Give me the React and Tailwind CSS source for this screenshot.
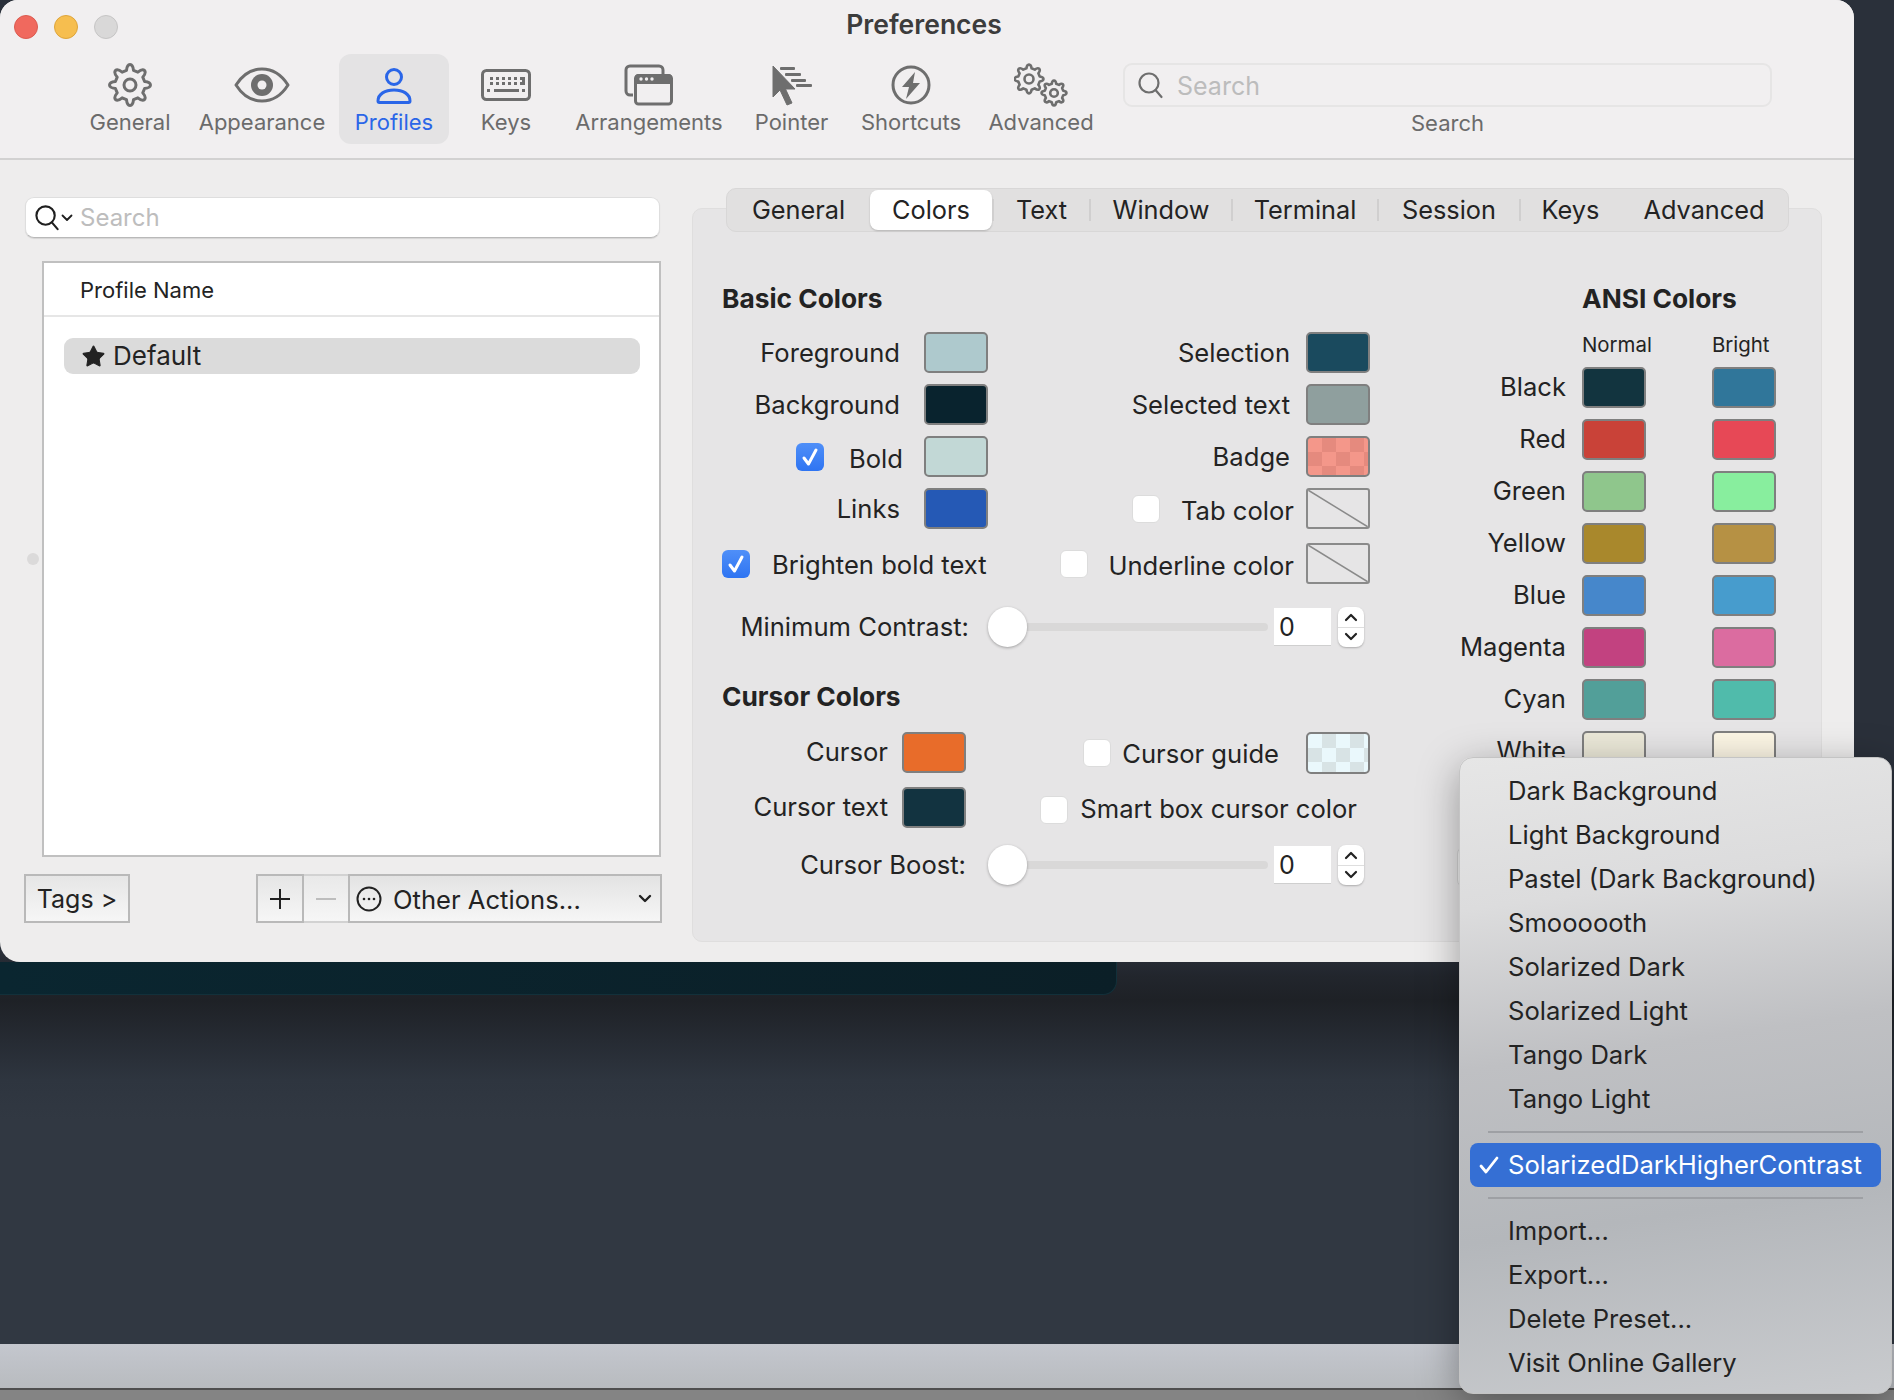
import { Star } from 'lucide-react'

const gray = '#6e6e6e'
const blue = '#2a66e8'

function gearPath(cx, cy, rOut, rIn, teeth = 8) {
  let d = ''
  const step = (Math.PI * 2) / teeth
  const pt = (r, a) => `${(cx + r * Math.cos(a)).toFixed(2)} ${(cy + r * Math.sin(a)).toFixed(2)}`
  for (let i = 0; i < teeth; i++) {
    const a = i * step - Math.PI / 2
    const w1 = step * 0.3
    const w2 = step * 0.17
    d += `${i === 0 ? 'M' : 'L'}${pt(rIn, a - w1)} Q${pt(rOut, a - w2 * 1.1)} ${pt(rOut, a)} Q${pt(rOut, a + w2 * 1.1)} ${pt(rIn, a + w1)} `
  }
  return d + 'Z'
}

function GearIcon() {
  return (
    <svg width="44" height="44" viewBox="0 0 44 44" fill="none" stroke={gray} strokeWidth="3" strokeLinejoin="round">
      <path d={gearPath(22, 22, 20.5, 15)} />
      <circle cx="22" cy="22" r="6" />
    </svg>
  )
}

function EyeIcon() {
  return (
    <svg width="56" height="36" viewBox="0 0 56 36" fill="none">
      <path d="M2 18C9 7 18 2 28 2s19 5 26 16c-7 11-16 16-26 16S9 29 2 18z" stroke={gray} strokeWidth="3" strokeLinejoin="round" />
      <circle cx="28" cy="18" r="11" fill={gray} />
      <circle cx="28" cy="18" r="4.5" fill="#f1eff0" />
    </svg>
  )
}

function PersonIcon() {
  return (
    <svg width="36" height="37" viewBox="0 0 36 37" fill="none" stroke={blue} strokeWidth="3">
      <circle cx="18" cy="10" r="7.5" />
      <path d="M2 34c0-7 7-11 16-11s16 4 16 11c0 1-.5 1.5-1.5 1.5h-29C2.500 35.500 2 35 2 34z" strokeLinejoin="round" />
    </svg>
  )
}

function KeyboardIcon() {
  const rows = [
    [9, 15, 21, 27, 33, 39],
    [9, 15, 21, 27, 33, 39],
  ]
  return (
    <svg width="50" height="32" viewBox="0 0 50 32" fill="none">
      <rect x="1.500" y="1.500" width="47" height="29" rx="4" stroke={gray} strokeWidth="3" />
      {rows.map((r, i) => r.map(x => <rect key={`${i}-${x}`} x={x} y={8 + i * 5} width="3" height="3" fill={gray} />))}
      <rect x="41" y="8" width="3" height="8" fill={gray} />
      <rect x="6" y="20" width="3" height="3" fill={gray} />
      <rect x="13" y="20" width="25" height="3" fill={gray} />
      <rect x="41" y="20" width="3" height="3" fill={gray} />
    </svg>
  )
}

function WindowsIcon() {
  return (
    <svg width="50" height="42" viewBox="0 0 50 42" fill="none">
      <path d="M9 31H6a4 4 0 0 1-4-4V6a4 4 0 0 1 4-4h29a4 4 0 0 1 4 4v5" stroke={gray} strokeWidth="3" />
      <rect x="11.500" y="11.500" width="36" height="28.500" rx="3" stroke={gray} strokeWidth="3" />
      <path d="M11 20v-6a4 4 0 0 1 4-4h29a4 4 0 0 1 4 4v6z" fill={gray} />
      <circle cx="17" cy="15" r="1.700" fill="#f1eff0" />
      <circle cx="22.500" cy="15" r="1.700" fill="#f1eff0" />
      <circle cx="28" cy="15" r="1.700" fill="#f1eff0" />
    </svg>
  )
}

function PointerIcon() {
  return (
    <svg width="42" height="42" viewBox="0 0 42 42" fill={gray}>
      <path d="M2 2v31l7-7 7 15 5-2-6.500-14H24z" stroke={gray} strokeWidth="1" strokeLinejoin="round" />
      <rect x="9" y="3" width="15" height="3" rx="1" />
      <rect x="14" y="9" width="16" height="3" rx="1" />
      <rect x="20" y="15" width="15" height="3" rx="1" />
      <rect x="25" y="20" width="16" height="3" rx="1" />
    </svg>
  )
}

function BoltIcon() {
  return (
    <svg width="40" height="40" viewBox="0 0 40 40" fill="none">
      <circle cx="20" cy="20" r="18" stroke={gray} strokeWidth="3" />
      <path d="M24 7L11 22h7l-3 12 14-16h-7z" fill={gray} />
    </svg>
  )
}

function GearsIcon() {
  return (
    <svg width="54" height="44" viewBox="0 0 54 44" fill="none" stroke={gray} strokeWidth="2.600" strokeLinejoin="round">
      <path d={gearPath(15, 16, 14.500, 11)} />
      <circle cx="15" cy="16" r="4.500" />
      <path d={gearPath(40, 30, 12.500, 9.500)} />
      <circle cx="40" cy="30" r="3.800" />
    </svg>
  )
}

const toolbarItems = [
  { label: 'General', w: 'w-[110px]', icon: <GearIcon /> },
  { label: 'Appearance', w: 'w-[154px]', icon: <EyeIcon /> },
  { label: 'Profiles', w: 'w-[110px]', icon: <PersonIcon />, active: true },
  { label: 'Keys', w: 'w-[114px]', icon: <KeyboardIcon /> },
  { label: 'Arrangements', w: 'w-[172px]', icon: <WindowsIcon /> },
  { label: 'Pointer', w: 'w-[113px]', icon: <PointerIcon /> },
  { label: 'Shortcuts', w: 'w-[126px]', icon: <BoltIcon /> },
  { label: 'Advanced', w: 'w-[134px]', icon: <GearsIcon /> },
]

function ToolbarItem({ label, w, icon, active }) {
  return (
    <div className={`${w} h-[90px] flex flex-col items-center pt-[9px] rounded-xl ${active ? 'bg-[#e4e3e4] text-[#2a66e8]' : 'text-[#6b6b6b]'}`}>
      <div className="h-[44px] flex items-center justify-center">{icon}</div>
      <span className="mt-[2px] text-[22px] leading-[26px]">{label}</span>
    </div>
  )
}

function SearchGlass({ color = '#6e6e6e', w = 28 }) {
  return (
    <svg width={w} height={w} viewBox="0 0 28 28" fill="none" stroke={color} strokeWidth="2.200" strokeLinecap="round">
      <circle cx="12" cy="12" r="9.500" />
      <path d="M18.500 19l6 7" />
    </svg>
  )
}

function Swatch({ color, className = '', h = 'h-[41px]' }) {
  return <div className={`w-[64px] ${h} shrink-0 rounded-[5px] border-2 border-[#7f7f7f] ${className}`} style={color ? { backgroundColor: color } : undefined} />
}

function BadgeSwatch() {
  return <Swatch className="bg-[repeating-conic-gradient(#e58a7e_0_25%,#f4978a_0_50%)] bg-[length:28px_28px]" />
}

function GuideSwatch() {
  return <Swatch h="h-[42px]" className="bg-[repeating-conic-gradient(#d8e3e5_0_25%,#eaf8fc_0_50%)] bg-[length:28px_28px]" />
}

function NoneSwatch() {
  return (
    <div className="w-[64px] h-[41px] shrink-0 rounded-[3px] border-2 border-[#8a8a8a] overflow-hidden">
      <svg width="100%" height="100%" viewBox="0 0 60 37" preserveAspectRatio="none">
        <line x1="0" y1="0" x2="60" y2="37" stroke="#8a8a8a" strokeWidth="1.500" />
      </svg>
    </div>
  )
}

function Check({ on }) {
  if (!on) return <div className="w-[28px] h-[28px] shrink-0 rounded-[6px] bg-white border border-[#dcdcdc]" />
  return (
    <div className="w-[28px] h-[28px] shrink-0 rounded-[6px] bg-gradient-to-b from-[#4f8ff8] to-[#2e74f2] flex items-center justify-center">
      <svg width="18" height="20" viewBox="0 0 18 20" fill="none" stroke="#ffffff" strokeWidth="3" strokeLinecap="round" strokeLinejoin="round">
        <path d="M3 11l4.500 6L15 3" />
      </svg>
    </div>
  )
}

function Stepper() {
  return (
    <div className="w-[26px] h-[40px] shrink-0 rounded-[8px] bg-white flex flex-col items-center justify-between py-[6px] shadow-[0_1px_2px_rgba(0,0,0,0.25)]">
      <svg width="14" height="9" viewBox="0 0 14 9" fill="none" stroke="#222222" strokeWidth="2.200" strokeLinecap="round" strokeLinejoin="round"><path d="M2 7l5-5 5 5" /></svg>
      <div className="w-full h-px bg-[#dedede]" />
      <svg width="14" height="9" viewBox="0 0 14 9" fill="none" stroke="#222222" strokeWidth="2.200" strokeLinecap="round" strokeLinejoin="round"><path d="M2 2l5 5 5-5" /></svg>
    </div>
  )
}

function SliderRow({ label, labelW, gap }) {
  return (
    <div className="flex items-center h-[40px]">
      <div className={`${labelW} ${gap} text-right shrink-0`}>{label}</div>
      <div className="w-[280px] flex items-center">
        <div className="w-[39px] h-[40px] shrink-0 rounded-full bg-white shadow-[0_1px_3px_rgba(0,0,0,0.3)] z-10" />
        <div className="flex-1 h-[8px] rounded-r-full bg-[#d9d8d8]" />
      </div>
      <div className="ml-[6px] mr-[7px] w-[57px] h-[38px] shrink-0 bg-white border-b border-[#cfcfcf] pl-[5px] text-[25px] leading-[38px]">0</div>
      <Stepper />
    </div>
  )
}

const tabs = [
  { label: 'General', w: 'w-[143px]' },
  { label: 'Colors', w: 'w-[122px]', active: true },
  { label: 'Text', w: 'w-[95px]', sep: true },
  { label: 'Window', w: 'w-[140px]', sep: true },
  { label: 'Terminal', w: 'w-[144px]', sep: true },
  { label: 'Session', w: 'w-[140px]', sep: true },
  { label: 'Keys', w: 'w-[99px]', sep: true },
  { label: 'Advanced', w: 'flex-1' },
]

const ansi = [
  ['Black', '#12343f', '#30769a'],
  ['Red', '#c94238', '#e74856'],
  ['Green', '#8fc68c', '#88ee9e'],
  ['Yellow', '#a9882c', '#b69144'],
  ['Blue', '#4687cb', '#479ccd'],
  ['Magenta', '#c24280', '#db6ca0'],
  ['Cyan', '#529f99', '#50bbab'],
  ['White', '#ebe8d8', '#fbf5e4'],
]

const presets = ['Dark Background', 'Light Background', 'Pastel (Dark Background)', 'Smoooooth', 'Solarized Dark', 'Solarized Light', 'Tango Dark', 'Tango Light']
const presetActions = ['Import...', 'Export...', 'Delete Preset...', 'Visit Online Gallery']

function ColorsPanel() {
  return (
    <div className="w-[1130px] h-[734px] mt-[48px] rounded-[10px] bg-[#e6e5e6] border border-[#dfdede]">
      {/* tab strip sits over the panel's top edge */}
      <div className="ml-[33px] w-[1063px] h-[44px] -mt-[21px] rounded-[10px] bg-[#e1e0e0] border border-[#d8d7d7] flex items-center text-[25.3px]">
        {tabs.map(t => (
          <div key={t.label} className="contents">
            {t.sep && <div className="w-[2px] h-[22px] bg-[#d0cfcf] shrink-0" />}
            <div className={`${t.w} h-[40px] flex items-center justify-center ${t.active ? 'bg-white rounded-[8px] shadow-[0_1px_2px_rgba(0,0,0,0.2)]' : ''}`}>
              {t.label}
            </div>
          </div>
        ))}
      </div>

      <div className="flex pl-[29px]">
        {/* Basic and cursor colors */}
        <div className="w-[648px]">
          <h2 className="mt-[52px] mb-[18px] h-[30px] text-[26.3px] leading-[30px] font-bold">Basic Colors</h2>

          <div className="flex flex-col gap-[11px]">
            <div className="flex justify-between h-[41px]">
              <div className="w-[266px] flex items-center justify-end"><span className="mr-[24px] mt-[2px]">Foreground</span><Swatch color="#aec9cd" /></div>
              <div className="flex items-center justify-end"><span className="mr-[16px] mt-[2px]">Selection</span><Swatch color="#1a4a5e" /></div>
            </div>
            <div className="flex justify-between h-[41px]">
              <div className="w-[266px] flex items-center justify-end"><span className="mr-[24px] mt-[2px]">Background</span><Swatch color="#09232e" /></div>
              <div className="flex items-center justify-end"><span className="mr-[16px] mt-[2px]">Selected text</span><Swatch color="#8f9f9e" /></div>
            </div>
            <div className="flex justify-between h-[41px]">
              <div className="w-[266px] flex items-center justify-end"><Check on /><span className="ml-[25px] mr-[21px] mt-[5px]">Bold</span><Swatch color="#c2d8d6" /></div>
              <div className="flex items-center justify-end"><span className="mr-[16px] mt-[2px]">Badge</span><BadgeSwatch /></div>
            </div>
            <div className="flex justify-between h-[41px]">
              <div className="w-[266px] flex items-center justify-end"><span className="mr-[24px] mt-[2px]">Links</span><Swatch color="#2559b5" /></div>
              <div className="flex items-center justify-end"><Check /><span className="ml-[21px] mr-[12px] mt-[5px]">Tab color</span><NoneSwatch /></div>
            </div>
          </div>

          <div className="flex justify-between items-center h-[41px] mt-[14px]">
            <div className="w-[266px] flex items-center"><Check on /><span className="ml-[22px] mt-[4px] whitespace-nowrap">Brighten bold text</span></div>
            <div className="flex items-center"><Check /><span className="ml-[20px] mr-[12px] mt-[5px]">Underline color</span><NoneSwatch /></div>
          </div>

          <div className="mt-[23px]">
            <SliderRow label="Minimum Contrast:" labelW="w-[247px]" gap="mr-[19px]" />
          </div>

          <h2 className="mt-[35px] mb-[20px] h-[30px] text-[26.3px] leading-[30px] font-bold">Cursor Colors</h2>

          <div className="flex justify-between items-center h-[41px]">
            <div className="w-[244px] flex items-center justify-end"><span className="mr-[14px]">Cursor</span><Swatch color="#e86c2a" /></div>
            <div className="flex items-center"><Check /><span className="ml-[11px] mr-[27px] mt-[4px]">Cursor guide</span><GuideSwatch /></div>
          </div>
          <div className="flex justify-between items-center h-[41px] mt-[14px]">
            <div className="w-[244px] flex items-center justify-end"><span className="mr-[14px]">Cursor text</span><Swatch color="#123340" /></div>
            <div className="flex items-center mr-[13px] mt-[4px]"><Check /><span className="ml-[12px]">Smart box cursor color</span></div>
          </div>

          <div className="mt-[17px]">
            <SliderRow label="Cursor Boost:" labelW="w-[244px]" gap="mr-[22px]" />
          </div>
        </div>

        {/* ANSI colors */}
        <div className="ml-[30px] w-[376px]">
          <h2 className="ml-[182px] mt-[52px] h-[30px] text-[26.3px] leading-[30px] font-bold whitespace-nowrap">ANSI Colors</h2>
          <div className="mt-[20px] h-[22px] flex text-[20.4px] leading-[22px]">
            <span className="ml-[182px] w-[130px]">Normal</span>
            <span>Bright</span>
          </div>
          <div className="mt-[11px] flex flex-col gap-[11px]">
            {ansi.map(([name, normal, bright]) => (
              <div key={name} className="flex items-center h-[41px]">
                <span className="w-[166px] mr-[16px] text-right">{name}</span>
                <Swatch color={normal} />
                <Swatch color={bright} className="ml-[66px]" />
              </div>
            ))}
          </div>
          {/* presets button, almost fully hidden by the open menu */}
          <div className="ml-[57px] mt-[74px] w-[220px] h-[42px] rounded-[8px] bg-[#f2f2f2] border border-[#d4d4d4]" />
        </div>
      </div>
    </div>
  )
}

function ProfilesColumn() {
  return (
    <div className="w-[668px] ml-[24px] shrink-0">
      <div className="ml-[1px] mt-[37px] w-[635px] h-[41px] rounded-[9px] bg-white border border-[#dedede] border-b-[#b9b9b9] flex items-center pl-[8px] shadow-[0_1px_1px_rgba(0,0,0,0.1)]">
        <SearchGlass color="#1f1f1f" w={27} />
        <svg width="12" height="8" viewBox="0 0 12 8" fill="none" stroke="#1f1f1f" strokeWidth="1.800" strokeLinecap="round" strokeLinejoin="round"><path d="M1.500 1.500L6 6l4.500-4.500" /></svg>
        <span className="ml-[7px] text-[24px] text-[#bdbdbd]">Search</span>
      </div>

      <div className="mt-[23px] flex items-center">
        <div className="w-[18px] flex justify-center"><div className="w-[12px] h-[12px] rounded-full bg-[#dbdada]" /></div>
        <div className="w-[619px] h-[596px] bg-white border-2 border-[#c0c0c0]">
          <div className="h-[54px] border-b-2 border-[#e6e6e6] flex items-center pl-[36px] pt-[2px] text-[22px]">Profile Name</div>
          <div className="ml-[20px] mt-[21px] w-[576px] h-[36px] rounded-[9px] bg-[#dbdbdb] flex items-center pl-[17px] text-[26px]">
            <Star size={25} fill="#222222" strokeWidth={1} />
            <span className="ml-[7px] mb-[2px]">Default</span>
          </div>
        </div>
      </div>

      <div className="mt-[17px] flex items-start">
        <div className="w-[106px] h-[49px] border-2 border-[#b9b9b9] bg-gradient-to-b from-[#e6e6e6] to-[#f6f6f6] flex items-center justify-center pt-[3px] text-[25px]">Tags &gt;</div>
        <div className="ml-[126px] w-[48px] h-[49px] border-2 border-[#b9b9b9] bg-gradient-to-b from-[#e6e6e6] to-[#f6f6f6] flex items-center justify-center">
          <svg width="22" height="22" viewBox="0 0 22 22" stroke="#222222" strokeWidth="2"><path d="M11 1v20M1 11h20" /></svg>
        </div>
        <div className="w-[44px] h-[49px] border-y-2 border-[#d2d2d2] bg-gradient-to-b from-[#e9e9e9] to-[#f6f6f6] flex items-center justify-center">
          <div className="w-[20px] h-[2px] bg-[#bdbdbd]" />
        </div>
        <div className="w-[314px] h-[49px] border-2 border-[#b9b9b9] bg-gradient-to-b from-[#e3e3e3] to-[#f6f6f6] flex items-center pl-[6px] pr-[8px]">
          <svg width="26" height="26" viewBox="0 0 26 26" fill="none" stroke="#222222" strokeWidth="2">
            <circle cx="13" cy="13" r="11.500" />
            <circle cx="8" cy="13" r="1.300" fill="#222222" stroke="none" />
            <circle cx="13" cy="13" r="1.300" fill="#222222" stroke="none" />
            <circle cx="18" cy="13" r="1.300" fill="#222222" stroke="none" />
          </svg>
          <span className="ml-[11px] mt-[3px]">Other Actions...</span>
          <svg className="ml-auto" width="14" height="10" viewBox="0 0 14 10" fill="none" stroke="#222222" strokeWidth="2.400" strokeLinecap="round" strokeLinejoin="round"><path d="M2 2l5 5 5-5" /></svg>
        </div>
      </div>
    </div>
  )
}

function PresetMenu() {
  return (
    <div className="absolute left-[1459px] top-[757px] z-20 w-[433px] h-[637px] rounded-[14px] pt-[11px] border border-[#c4c4c4] bg-[linear-gradient(172deg,#e6e6e6_0%,#dcdcdd_22%,#bfc0c3_45%,#b4b7bb_70%,#c9cbce_100%)] shadow-[0_10px_40px_rgba(0,0,0,0.35)]">
      {presets.map(p => <div key={p} className="h-[44px] pl-[48px] flex items-center">{p}</div>)}
      <div className="mx-[28px] mt-[10px] h-[2px] bg-[#9ea0a4]" />
      <div className="mx-[10px] mt-[10px] h-[44px] rounded-[8px] bg-[#356fd4] text-white flex items-center pl-[9px]">
        <svg width="20" height="18" viewBox="0 0 20 18" fill="none" stroke="#ffffff" strokeWidth="2.800" strokeLinecap="round" strokeLinejoin="round"><path d="M2 10l5 6L18 2" /></svg>
        <span className="ml-[9px]">SolarizedDarkHigherContrast</span>
      </div>
      <div className="mx-[28px] mt-[10px] h-[2px] bg-[#9ea0a4]" />
      <div className="mt-[10px]">
        {presetActions.map(p => <div key={p} className="h-[44px] pl-[48px] flex items-center">{p}</div>)}
      </div>
    </div>
  )
}

export default function App() {
  return (
    <div className="relative w-[1894px] h-[1400px] overflow-hidden flex flex-col bg-[linear-gradient(180deg,#2a303a_0,#2a303a_950px,#22262d_975px,#1e2126_1000px,#262b33_1040px,#2e353f_1080px,#313842_1120px)] font-['Inter',sans-serif] text-[25.6px] text-[#232323]">
      <div className="relative z-10 w-[1854px] h-[962px] shrink-0 rounded-b-[20px] rounded-t-[18px] bg-[#eeeded]">
        {/* Toolbar */}
        <div className="h-[160px] rounded-t-[18px] bg-[#f1eff0] border-b-2 border-[#d2d1d1]">
          <div className="h-[54px] flex items-center">
            <div className="w-[118px] pl-[14px] flex gap-[16px] shrink-0">
              <div className="w-[24px] h-[24px] rounded-full bg-[#f0695e] border border-[#dc5b50]" />
              <div className="w-[24px] h-[24px] rounded-full bg-[#f6be4f] border border-[#dea53b]" />
              <div className="w-[24px] h-[24px] rounded-full bg-[#d9d8d8] border border-[#c6c5c5]" />
            </div>
            <div className="w-[1612px] pb-[4px] text-center text-[26.5px] font-semibold text-[#3c3c3c]">Preferences</div>
          </div>
          <div className="flex pl-[75px]">
            {toolbarItems.map(item => <ToolbarItem key={item.label} {...item} />)}
            <div className="ml-[15px] w-[649px] flex flex-col items-center pt-[9px]">
              <div className="w-full h-[44px] rounded-[9px] border-2 border-[#e6e5e5] flex items-center pl-[12px]">
                <SearchGlass />
                <span className="ml-[12px] mt-[3px] text-[25px] text-[#bcbcbc]">Search</span>
              </div>
              <span className="mt-[3px] text-[22px] leading-[26px] text-[#6b6b6b]">Search</span>
            </div>
          </div>
        </div>

        {/* Body */}
        <div className="flex">
          <ProfilesColumn />
          <ColorsPanel />
        </div>
      </div>

      {/* terminal window peeking out behind preferences */}
      <div className="w-[1117px] h-[33px] shrink-0 rounded-br-[14px] bg-gradient-to-r from-[#0a2630] to-[#0b1f27] border-b border-r border-[#12303a]" />
      <div className="flex-1" />
      <div className="h-[44px] shrink-0 bg-gradient-to-b from-[#c4c7ce] to-[#b8bbbf]" />
      <div className="h-[12px] shrink-0 border-t-2 border-[#4f4f4f] bg-[#848484]" />

      <PresetMenu />
    </div>
  )
}
